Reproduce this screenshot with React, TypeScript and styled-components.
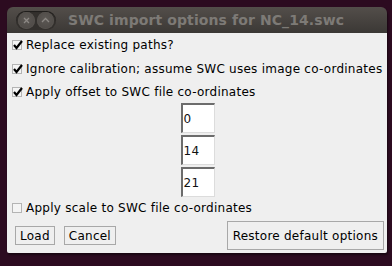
import React from "react";
import styled, { createGlobalStyle } from "styled-components";

const Global = createGlobalStyle`
  html, body { margin: 0; padding: 0; background: #2c0b20; }
  body { width: 392px; height: 266px; overflow: hidden; font-family: "DejaVu Sans", sans-serif; }
`;

const Desk = styled.div`
  width: 392px;
  height: 266px;
  padding: 7px 5px 0 7px;
  box-sizing: border-box;
`;

const Win = styled.div`
  width: 380px;
  display: flex;
  flex-direction: column;
  box-shadow: 1px 2px 2px rgba(0,0,0,0.45);
  border-radius: 6px 6px 2px 2px;
`;

const TitleBar = styled.div`
  height: 26px;
  display: flex;
  align-items: center;
  border-radius: 6px 6px 0 0;
  background: linear-gradient(#534e4a, #3b3835);
  padding-left: 9px;
`;

const Controls = styled.div`
  display: flex;
  gap: 2px;
  padding: 1px 2px;
  border-radius: 10px;
  background: #33302d;
  box-shadow: inset 0 1px 1px rgba(0,0,0,0.4);
`;

const CtrlBtn = styled.div`
  width: 17px;
  height: 17px;
  border-radius: 50%;
  background: radial-gradient(circle at 50% 40%, #5c5854, #4a4643);
  box-shadow: inset 0 0 0 1px #55514d;
  display: flex;
  align-items: center;
  justify-content: center;
`;

const Title = styled.div`
  margin-left: 12px;
  color: #7d7a76;
  font-weight: bold;
  font-size: 14px;
  letter-spacing: 0.1px;
`;

const Body = styled.div`
  background: #efefef;
  display: flex;
  flex-direction: column;
  height: 220px;
  border-radius: 0 0 2px 2px;
  letter-spacing: 0.25px;
`;

const CheckRow = styled.div<{ $h: number }>`
  height: ${p => p.$h}px;
  display: flex;
  align-items: center;
  padding-left: 5px;
  font-size: 12px;
  color: #000;
`;

const Box = styled.div`
  width: 8px;
  height: 8px;
  border: 1px solid #b4b4b4;
  background: #f4f4f4;
  margin-right: 4px;
  position: relative;
  flex: none;
`;

const Fields = styled.div`
  display: flex;
  flex-direction: column;
  align-items: center;
  gap: 2px;
  padding-left: 1px;
`;

const Field = styled.div`
  width: 30px;
  height: 27px;
  background: #fff;
  border-top: 2px solid #6c6c6c;
  border-left: 2px solid #6c6c6c;
  border-right: 1px solid #dcdcdc;
  border-bottom: 1px solid #dcdcdc;
  font-size: 12px;
  color: #111;
  display: flex;
  align-items: center;
  padding-left: 1px;
`;

const ButtonRow = styled.div`
  display: flex;
  align-items: center;
  padding: 2px 3px 0 8px;
  gap: 9px;
`;

const Btn = styled.div<{ $h: number; $pad: number }>`
  height: ${p => p.$h}px;
  box-sizing: border-box;
  border: 1px solid #a8a8a8;
  background: #efefef;
  font-size: 12px;
  color: #000;
  display: flex;
  align-items: center;
  padding: 0 ${p => p.$pad}px;
`;

const Spacer = styled.div`
  flex: 1;
`;

const Check = ({ on }: { on: boolean }) => (
  <Box>
    {on && (
      <svg width="10" height="10" viewBox="0 0 10 10" style={{ position: "absolute", left: 0, top: -1 }}>
        <path d="M1 5 L3.5 8 L9 1" stroke="#000" strokeWidth="2.2" fill="none" />
      </svg>
    )}
  </Box>
);

export default function App() {
  return (
    <>
      <Global />
      <Desk>
        <Win>
          <TitleBar>
            <Controls>
              <CtrlBtn>
                <svg width="7" height="7" viewBox="0 0 7 7">
                  <path d="M1 1 L6 6 M6 1 L1 6" stroke="#8c8884" strokeWidth="1.3" />
                </svg>
              </CtrlBtn>
              <CtrlBtn>
                <svg width="9" height="6" viewBox="0 0 9 6">
                  <path d="M1 5 L4.5 1.5 L8 5" stroke="#8c8884" strokeWidth="1.3" fill="none" />
                </svg>
              </CtrlBtn>
            </Controls>
            <Title>SWC import options for NC_14.swc</Title>
          </TitleBar>
          <Body>
            <CheckRow $h={24}><Check on />Replace existing paths?</CheckRow>
            <CheckRow $h={23}><Check on />Ignore calibration; assume SWC uses image co-ordinates</CheckRow>
            <CheckRow $h={23}><Check on />Apply offset to SWC file co-ordinates</CheckRow>
            <Fields>
              <Field>0</Field>
              <Field>14</Field>
              <Field>21</Field>
            </Fields>
            <CheckRow $h={22}><Check on={false} />Apply scale to SWC file co-ordinates</CheckRow>
            <ButtonRow>
              <Btn $h={19} $pad={4}>Load</Btn>
              <Btn $h={19} $pad={4}>Cancel</Btn>
              <Spacer />
              <Btn $h={29} $pad={5}>Restore default options</Btn>
            </ButtonRow>
          </Body>
        </Win>
      </Desk>
    </>
  );
}
